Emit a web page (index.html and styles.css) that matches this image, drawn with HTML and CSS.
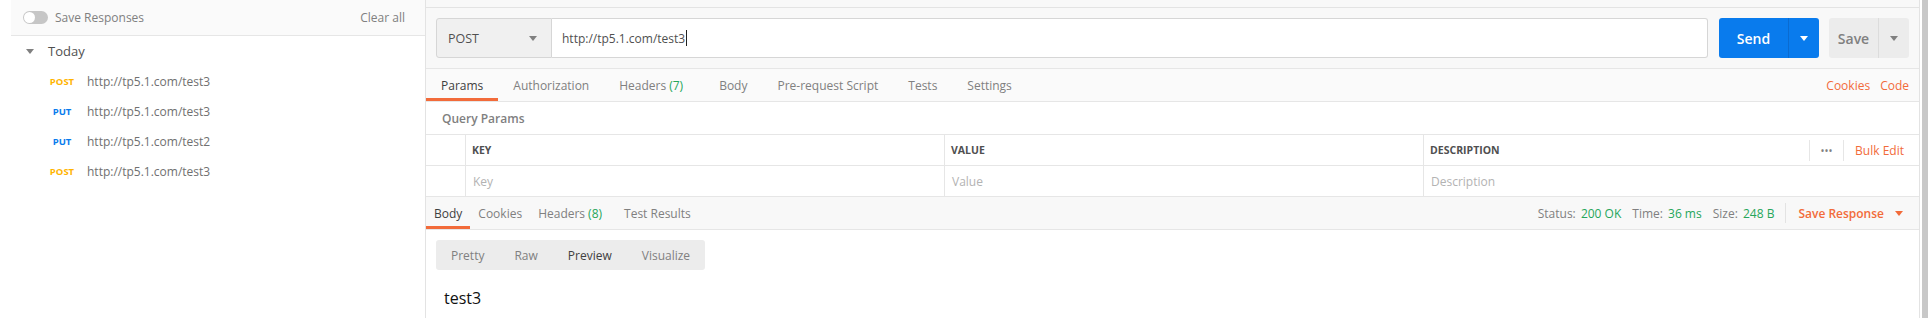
FILE: index.html
```html
<!DOCTYPE html>
<html lang="en">
<head>
    <meta charset="UTF-8">
    <title>Postman</title>
    <link rel="stylesheet" href="styles.css">
</head>
<body>
    <div class="sidebar">
        <div class="sidebar-head">
            <span class="toggle"><span class="knob"></span></span>
            <span class="save-resp">Save Responses</span>
            <span class="clear-all">Clear all</span>
        </div>
        <div class="group-title">
            <span class="tri"></span>
            <span>Today</span>
        </div>
        <div class="history-item"><span class="method post">POST</span><span class="url">http://tp5.1.com/test3</span></div>
        <div class="history-item"><span class="method put">PUT</span><span class="url">http://tp5.1.com/test3</span></div>
        <div class="history-item"><span class="method put">PUT</span><span class="url">http://tp5.1.com/test2</span></div>
        <div class="history-item"><span class="method post">POST</span><span class="url">http://tp5.1.com/test3</span></div>
    </div>

    <div class="main">
        <div class="top-strip"></div>

        <div class="url-row">
            <div class="method-select">
                <span>POST</span>
                <span class="caret"></span>
            </div>
            <div class="url-input">http://tp5.1.com/test3<span class="cursor"></span></div>
            <div class="send-btn">
                <span class="btn-label">Send</span>
                <span class="btn-drop"><span class="caret white"></span></span>
            </div>
            <div class="save-btn">
                <span class="btn-label">Save</span>
                <span class="btn-drop"><span class="caret"></span></span>
            </div>
        </div>

        <div class="req-tabs">
            <span class="tab active">Params</span>
            <span class="tab">Authorization</span>
            <span class="tab">Headers <span class="count">(7)</span></span>
            <span class="tab">Body</span>
            <span class="tab">Pre-request Script</span>
            <span class="tab">Tests</span>
            <span class="tab">Settings</span>
            <span class="tab-links">
                <span class="link">Cookies</span>
                <span class="link">Code</span>
            </span>
        </div>

        <div class="query-title">Query Params</div>

        <div class="params-table">
            <div class="cell"></div>
            <div class="cell head">KEY</div>
            <div class="cell head">VALUE</div>
            <div class="cell head desc-head">
                <span>DESCRIPTION</span>
                <span class="head-actions">
                    <span class="dots">•••</span>
                    <span class="bulk">Bulk Edit</span>
                </span>
            </div>
            <div class="cell"></div>
            <div class="cell ph">Key</div>
            <div class="cell ph">Value</div>
            <div class="cell ph">Description</div>
        </div>

        <div class="res-tabs">
            <span class="rtab active">Body</span>
            <span class="rtab">Cookies</span>
            <span class="rtab">Headers <span class="count">(8)</span></span>
            <span class="rtab">Test Results</span>
            <span class="res-meta">
                <span class="meta">Status: <span class="ok">200 OK</span></span>
                <span class="meta">Time: <span class="ok">36 ms</span></span>
                <span class="meta">Size: <span class="ok">248 B</span></span>
                <span class="save-response">Save Response <span class="caret orange"></span></span>
            </span>
        </div>

        <div class="res-body">
            <div class="view-modes">
                <span class="mode">Pretty</span>
                <span class="mode">Raw</span>
                <span class="mode current">Preview</span>
                <span class="mode">Visualize</span>
            </div>
            <div class="preview">test3</div>
        </div>
    </div>

    <div class="scrollbar"><div class="thumb"></div></div>
</body>
</html>
```

FILE: styles.css
```css
body {
    margin: 0;
    height: 318px;
    overflow: hidden;
    display: flex;
    font-family: "Open Sans", Arial, sans-serif;
    font-size: 12px;
    color: #505050;
    background-color: #fff;
}

/* sidebar */
.sidebar {
    width: 425px;
    flex: none;
    border-right: 1px solid #e3e3e3;
}
.sidebar-head {
    margin-left: 11px;
    height: 35px;
    padding: 0 20px 0 12px;
    display: flex;
    align-items: center;
    background-color: #fafafa;
    border-bottom: 1px solid #e6e6e6;
    color: #808080;
}
.toggle {
    width: 25px;
    height: 13px;
    border-radius: 7px;
    background-color: #c6c6c6;
    position: relative;
}
.knob {
    position: absolute;
    left: 1px;
    top: 1px;
    width: 11px;
    height: 11px;
    border-radius: 50%;
    background-color: #fff;
}
.save-resp {
    margin-left: 7px;
    font-size: 12px;
}
.clear-all {
    margin-left: auto;
}
.group-title {
    height: 30px;
    display: flex;
    align-items: center;
    padding-left: 26px;
    font-size: 13px;
    color: #505050;
}
.tri {
    width: 0;
    height: 0;
    border-left: 4px solid transparent;
    border-right: 4px solid transparent;
    border-top: 5px solid #808080;
    margin-right: 14px;
}
.history-item {
    height: 30px;
    display: flex;
    align-items: center;
    padding-left: 44px;
}
.method {
    width: 36px;
    text-align: center;
    font-size: 9.5px;
    font-weight: 700;
    margin-right: 7px;
}
.post {
    color: #ffb400;
}
.put {
    color: #097bed;
}
.url {
    color: #707070;
}

/* main area */
.main {
    flex: 1;
    min-width: 0;
    display: flex;
    flex-direction: column;
    border-right: 1px solid #e3e3e3;
}
.top-strip {
    height: 7px;
    background-color: #f8f8f8;
    border-bottom: 1px solid #e3e3e3;
}
.url-row {
    display: flex;
    padding: 10px;
    height: 40px;
    background-color: #f8f8f8;
}
.method-select {
    width: 116px;
    box-sizing: border-box;
    display: flex;
    align-items: center;
    padding: 0 14px 0 11px;
    background-color: #f0f0f0;
    border: 1px solid #d6d6d6;
    border-radius: 3px 0 0 3px;
    font-size: 12.5px;
    color: #505050;
}
.method-select .caret {
    margin-left: auto;
}
.caret {
    display: inline-block;
    width: 0;
    height: 0;
    border-left: 4px solid transparent;
    border-right: 4px solid transparent;
    border-top: 5px solid #808080;
}
.caret.white {
    border-top-color: #fff;
}
.caret.orange {
    border-top-color: #f26b3a;
}
.url-input {
    flex: 1;
    display: flex;
    align-items: center;
    padding-left: 10px;
    background-color: #fff;
    border: 1px solid #d6d6d6;
    border-left: none;
    border-radius: 0 3px 3px 0;
    color: #505050;
}
.cursor {
    display: inline-block;
    width: 0;
    height: 16px;
    border-left: 1px solid #222;
    margin-left: 1px;
}
.send-btn,
.save-btn {
    display: flex;
    border-radius: 3px;
    font-size: 14px;
    font-weight: 600;
}
.send-btn {
    margin-left: 11px;
    width: 100px;
    background-color: #097bed;
    color: #fff;
}
.save-btn {
    margin-left: 10px;
    width: 80px;
    background-color: #ececec;
    color: #808080;
}
.btn-label {
    flex: 1;
    display: flex;
    align-items: center;
    justify-content: center;
}
.btn-drop {
    width: 30px;
    display: flex;
    align-items: center;
    justify-content: center;
}
.send-btn .btn-drop {
    border-left: 1px solid #0a6bd0;
}
.save-btn .btn-drop {
    border-left: 1px solid #dcdcdc;
}

/* request tabs */
.req-tabs,
.res-tabs {
    display: flex;
    align-items: stretch;
    height: 32px;
    background-color: #fafafa;
    border-bottom: 1px solid #e6e6e6;
}
.req-tabs {
    border-top: 1px solid #e6e6e6;
}
.tab,
.rtab {
    display: flex;
    align-items: center;
    color: #808080;
    border-bottom: 3px solid transparent;
    padding-top: 3px;
}
.tab {
    padding-left: 15px;
    padding-right: 15px;
}
.rtab {
    padding-left: 8px;
    padding-right: 8px;
}
.tab.active,
.rtab.active {
    color: #404040;
    border-bottom-color: #f26b3a;
}
.count {
    color: #26a65b;
    margin-left: 3px;
    margin-right: 6px;
}
.tab-links {
    margin-left: auto;
    display: flex;
    align-items: center;
    gap: 10px;
    padding-right: 10px;
}
.link {
    color: #f26b3a;
}

.query-title {
    height: 32px;
    display: flex;
    align-items: center;
    padding-left: 16px;
    font-weight: 600;
    color: #808080;
}

/* params table */
.params-table {
    display: grid;
    grid-template-columns: 40px 479px 479px 1fr;
    grid-auto-rows: 31px;
    border-top: 1px solid #e6e6e6;
}
.cell {
    display: flex;
    align-items: center;
    padding-left: 6px;
    border-right: 1px solid #e6e6e6;
    border-bottom: 1px solid #e6e6e6;
    background-color: #fff;
}
.cell:nth-child(4n) {
    border-right: none;
}
.head {
    font-size: 10.5px;
    font-weight: 700;
    color: #505050;
}
.ph {
    padding-left: 7px;
    color: #b3b3b3;
}
.desc-head {
    padding-right: 15px;
}
.head-actions {
    margin-left: auto;
    display: flex;
    align-items: center;
    height: 21px;
}
.dots {
    font-size: 8px;
    letter-spacing: 1px;
    color: #808080;
    border-left: 1px solid #e6e6e6;
    border-right: 1px solid #e6e6e6;
    height: 21px;
    line-height: 21px;
    padding: 0 10px 0 11px;
}
.bulk {
    margin-left: 11px;
    font-size: 12px;
    font-weight: 400;
    color: #f26b3a;
}

/* response */
.res-tabs {
    background-color: #f8f8f8;
}
.res-meta {
    margin-left: auto;
    display: flex;
    align-items: center;
    padding-right: 16px;
}
.meta {
    color: #808080;
    margin-right: 11px;
}
.ok {
    color: #26a65b;
    margin-left: 2px;
}
.save-response {
    display: flex;
    align-items: center;
    gap: 11px;
    height: 20px;
    padding-left: 12px;
    border-left: 1px solid #e3e3e3;
    color: #f26b3a;
    font-size: 12px;
    font-weight: 600;
}
.res-body {
    padding: 10px 10px 0;
}
.view-modes {
    display: inline-flex;
    height: 30px;
    background-color: #ececec;
    border-radius: 3px;
}
.mode {
    display: flex;
    align-items: center;
    padding: 0 15px;
    color: #808080;
}
.mode.current {
    color: #404040;
}
.preview {
    margin-top: 17px;
    padding-left: 8px;
    font-size: 16px;
    line-height: 22px;
    color: #111;
}

.scrollbar {
    width: 11px;
    flex: none;
    padding: 0 3px 0 2px;
    box-sizing: border-box;
}
.thumb {
    height: 100%;
    background-color: #c8c8c8;
}
```
